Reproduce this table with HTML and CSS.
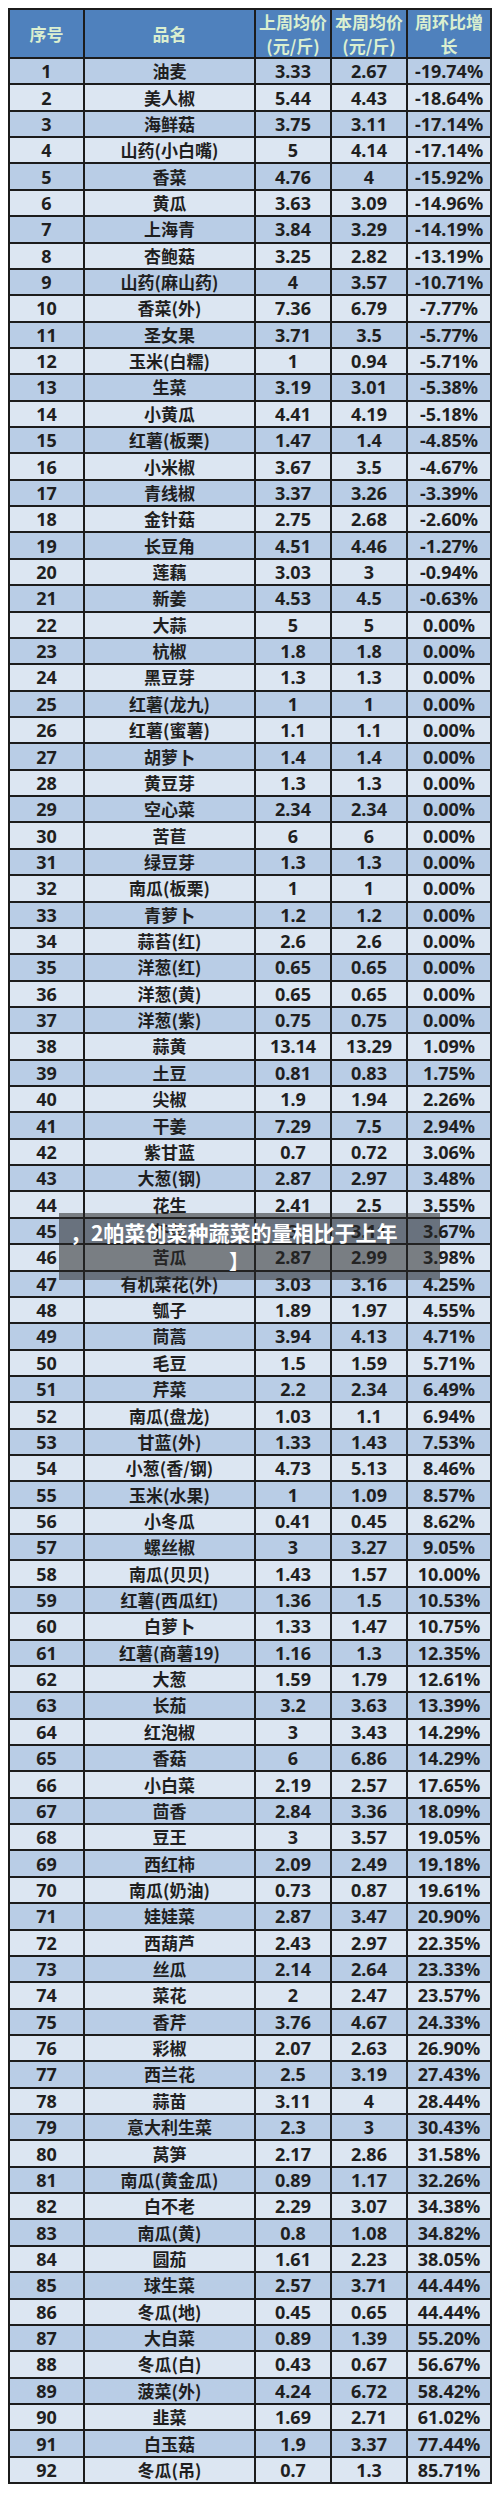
FILE: index.html
```html
<!DOCTYPE html>
<html lang="zh-CN">
<head>
<meta charset="utf-8">
<title>蔬菜周均价环比</title>
<link rel="stylesheet" href="styles.css">
</head>
<body>
<div class="page">
  <div class="grid">
    <div class="row head">
      <div class="cell">序号</div>
      <div class="cell">品名</div>
      <div class="cell">上周均价<br>(元/斤)</div>
      <div class="cell">本周均价<br>(元/斤)</div>
      <div class="cell">周环比增<br>长</div>
    </div>
    <div class="row"><div class="cell">1</div><div class="cell name">油麦</div><div class="cell">3.33</div><div class="cell">2.67</div><div class="cell">-19.74%</div></div>
    <div class="row"><div class="cell">2</div><div class="cell name">美人椒</div><div class="cell">5.44</div><div class="cell">4.43</div><div class="cell">-18.64%</div></div>
    <div class="row"><div class="cell">3</div><div class="cell name">海鲜菇</div><div class="cell">3.75</div><div class="cell">3.11</div><div class="cell">-17.14%</div></div>
    <div class="row"><div class="cell">4</div><div class="cell name">山药(小白嘴)</div><div class="cell">5</div><div class="cell">4.14</div><div class="cell">-17.14%</div></div>
    <div class="row"><div class="cell">5</div><div class="cell name">香菜</div><div class="cell">4.76</div><div class="cell">4</div><div class="cell">-15.92%</div></div>
    <div class="row"><div class="cell">6</div><div class="cell name">黄瓜</div><div class="cell">3.63</div><div class="cell">3.09</div><div class="cell">-14.96%</div></div>
    <div class="row"><div class="cell">7</div><div class="cell name">上海青</div><div class="cell">3.84</div><div class="cell">3.29</div><div class="cell">-14.19%</div></div>
    <div class="row"><div class="cell">8</div><div class="cell name">杏鲍菇</div><div class="cell">3.25</div><div class="cell">2.82</div><div class="cell">-13.19%</div></div>
    <div class="row"><div class="cell">9</div><div class="cell name">山药(麻山药)</div><div class="cell">4</div><div class="cell">3.57</div><div class="cell">-10.71%</div></div>
    <div class="row"><div class="cell">10</div><div class="cell name">香菜(外)</div><div class="cell">7.36</div><div class="cell">6.79</div><div class="cell">-7.77%</div></div>
    <div class="row"><div class="cell">11</div><div class="cell name">圣女果</div><div class="cell">3.71</div><div class="cell">3.5</div><div class="cell">-5.77%</div></div>
    <div class="row"><div class="cell">12</div><div class="cell name">玉米(白糯)</div><div class="cell">1</div><div class="cell">0.94</div><div class="cell">-5.71%</div></div>
    <div class="row"><div class="cell">13</div><div class="cell name">生菜</div><div class="cell">3.19</div><div class="cell">3.01</div><div class="cell">-5.38%</div></div>
    <div class="row"><div class="cell">14</div><div class="cell name">小黄瓜</div><div class="cell">4.41</div><div class="cell">4.19</div><div class="cell">-5.18%</div></div>
    <div class="row"><div class="cell">15</div><div class="cell name">红薯(板栗)</div><div class="cell">1.47</div><div class="cell">1.4</div><div class="cell">-4.85%</div></div>
    <div class="row"><div class="cell">16</div><div class="cell name">小米椒</div><div class="cell">3.67</div><div class="cell">3.5</div><div class="cell">-4.67%</div></div>
    <div class="row"><div class="cell">17</div><div class="cell name">青线椒</div><div class="cell">3.37</div><div class="cell">3.26</div><div class="cell">-3.39%</div></div>
    <div class="row"><div class="cell">18</div><div class="cell name">金针菇</div><div class="cell">2.75</div><div class="cell">2.68</div><div class="cell">-2.60%</div></div>
    <div class="row"><div class="cell">19</div><div class="cell name">长豆角</div><div class="cell">4.51</div><div class="cell">4.46</div><div class="cell">-1.27%</div></div>
    <div class="row"><div class="cell">20</div><div class="cell name">莲藕</div><div class="cell">3.03</div><div class="cell">3</div><div class="cell">-0.94%</div></div>
    <div class="row"><div class="cell">21</div><div class="cell name">新姜</div><div class="cell">4.53</div><div class="cell">4.5</div><div class="cell">-0.63%</div></div>
    <div class="row"><div class="cell">22</div><div class="cell name">大蒜</div><div class="cell">5</div><div class="cell">5</div><div class="cell">0.00%</div></div>
    <div class="row"><div class="cell">23</div><div class="cell name">杭椒</div><div class="cell">1.8</div><div class="cell">1.8</div><div class="cell">0.00%</div></div>
    <div class="row"><div class="cell">24</div><div class="cell name">黑豆芽</div><div class="cell">1.3</div><div class="cell">1.3</div><div class="cell">0.00%</div></div>
    <div class="row"><div class="cell">25</div><div class="cell name">红薯(龙九)</div><div class="cell">1</div><div class="cell">1</div><div class="cell">0.00%</div></div>
    <div class="row"><div class="cell">26</div><div class="cell name">红薯(蜜薯)</div><div class="cell">1.1</div><div class="cell">1.1</div><div class="cell">0.00%</div></div>
    <div class="row"><div class="cell">27</div><div class="cell name">胡萝卜</div><div class="cell">1.4</div><div class="cell">1.4</div><div class="cell">0.00%</div></div>
    <div class="row"><div class="cell">28</div><div class="cell name">黄豆芽</div><div class="cell">1.3</div><div class="cell">1.3</div><div class="cell">0.00%</div></div>
    <div class="row"><div class="cell">29</div><div class="cell name">空心菜</div><div class="cell">2.34</div><div class="cell">2.34</div><div class="cell">0.00%</div></div>
    <div class="row"><div class="cell">30</div><div class="cell name">苦苣</div><div class="cell">6</div><div class="cell">6</div><div class="cell">0.00%</div></div>
    <div class="row"><div class="cell">31</div><div class="cell name">绿豆芽</div><div class="cell">1.3</div><div class="cell">1.3</div><div class="cell">0.00%</div></div>
    <div class="row"><div class="cell">32</div><div class="cell name">南瓜(板栗)</div><div class="cell">1</div><div class="cell">1</div><div class="cell">0.00%</div></div>
    <div class="row"><div class="cell">33</div><div class="cell name">青萝卜</div><div class="cell">1.2</div><div class="cell">1.2</div><div class="cell">0.00%</div></div>
    <div class="row"><div class="cell">34</div><div class="cell name">蒜苔(红)</div><div class="cell">2.6</div><div class="cell">2.6</div><div class="cell">0.00%</div></div>
    <div class="row"><div class="cell">35</div><div class="cell name">洋葱(红)</div><div class="cell">0.65</div><div class="cell">0.65</div><div class="cell">0.00%</div></div>
    <div class="row"><div class="cell">36</div><div class="cell name">洋葱(黄)</div><div class="cell">0.65</div><div class="cell">0.65</div><div class="cell">0.00%</div></div>
    <div class="row"><div class="cell">37</div><div class="cell name">洋葱(紫)</div><div class="cell">0.75</div><div class="cell">0.75</div><div class="cell">0.00%</div></div>
    <div class="row"><div class="cell">38</div><div class="cell name">蒜黄</div><div class="cell">13.14</div><div class="cell">13.29</div><div class="cell">1.09%</div></div>
    <div class="row"><div class="cell">39</div><div class="cell name">土豆</div><div class="cell">0.81</div><div class="cell">0.83</div><div class="cell">1.75%</div></div>
    <div class="row"><div class="cell">40</div><div class="cell name">尖椒</div><div class="cell">1.9</div><div class="cell">1.94</div><div class="cell">2.26%</div></div>
    <div class="row"><div class="cell">41</div><div class="cell name">干姜</div><div class="cell">7.29</div><div class="cell">7.5</div><div class="cell">2.94%</div></div>
    <div class="row"><div class="cell">42</div><div class="cell name">紫甘蓝</div><div class="cell">0.7</div><div class="cell">0.72</div><div class="cell">3.06%</div></div>
    <div class="row"><div class="cell">43</div><div class="cell name">大葱(钢)</div><div class="cell">2.87</div><div class="cell">2.97</div><div class="cell">3.48%</div></div>
    <div class="row"><div class="cell">44</div><div class="cell name">花生</div><div class="cell">2.41</div><div class="cell">2.5</div><div class="cell">3.55%</div></div>
    <div class="row"><div class="cell">45</div><div class="cell name">芥蓝</div><div class="cell">3</div><div class="cell">3.11</div><div class="cell">3.67%</div></div>
    <div class="row"><div class="cell">46</div><div class="cell name">苦瓜</div><div class="cell">2.87</div><div class="cell">2.99</div><div class="cell">3.98%</div></div>
    <div class="row"><div class="cell">47</div><div class="cell name">有机菜花(外)</div><div class="cell">3.03</div><div class="cell">3.16</div><div class="cell">4.25%</div></div>
    <div class="row"><div class="cell">48</div><div class="cell name">瓠子</div><div class="cell">1.89</div><div class="cell">1.97</div><div class="cell">4.55%</div></div>
    <div class="row"><div class="cell">49</div><div class="cell name">茼蒿</div><div class="cell">3.94</div><div class="cell">4.13</div><div class="cell">4.71%</div></div>
    <div class="row"><div class="cell">50</div><div class="cell name">毛豆</div><div class="cell">1.5</div><div class="cell">1.59</div><div class="cell">5.71%</div></div>
    <div class="row"><div class="cell">51</div><div class="cell name">芹菜</div><div class="cell">2.2</div><div class="cell">2.34</div><div class="cell">6.49%</div></div>
    <div class="row"><div class="cell">52</div><div class="cell name">南瓜(盘龙)</div><div class="cell">1.03</div><div class="cell">1.1</div><div class="cell">6.94%</div></div>
    <div class="row"><div class="cell">53</div><div class="cell name">甘蓝(外)</div><div class="cell">1.33</div><div class="cell">1.43</div><div class="cell">7.53%</div></div>
    <div class="row"><div class="cell">54</div><div class="cell name">小葱(香/钢)</div><div class="cell">4.73</div><div class="cell">5.13</div><div class="cell">8.46%</div></div>
    <div class="row"><div class="cell">55</div><div class="cell name">玉米(水果)</div><div class="cell">1</div><div class="cell">1.09</div><div class="cell">8.57%</div></div>
    <div class="row"><div class="cell">56</div><div class="cell name">小冬瓜</div><div class="cell">0.41</div><div class="cell">0.45</div><div class="cell">8.62%</div></div>
    <div class="row"><div class="cell">57</div><div class="cell name">螺丝椒</div><div class="cell">3</div><div class="cell">3.27</div><div class="cell">9.05%</div></div>
    <div class="row"><div class="cell">58</div><div class="cell name">南瓜(贝贝)</div><div class="cell">1.43</div><div class="cell">1.57</div><div class="cell">10.00%</div></div>
    <div class="row"><div class="cell">59</div><div class="cell name">红薯(西瓜红)</div><div class="cell">1.36</div><div class="cell">1.5</div><div class="cell">10.53%</div></div>
    <div class="row"><div class="cell">60</div><div class="cell name">白萝卜</div><div class="cell">1.33</div><div class="cell">1.47</div><div class="cell">10.75%</div></div>
    <div class="row"><div class="cell">61</div><div class="cell name">红薯(商薯19)</div><div class="cell">1.16</div><div class="cell">1.3</div><div class="cell">12.35%</div></div>
    <div class="row"><div class="cell">62</div><div class="cell name">大葱</div><div class="cell">1.59</div><div class="cell">1.79</div><div class="cell">12.61%</div></div>
    <div class="row"><div class="cell">63</div><div class="cell name">长茄</div><div class="cell">3.2</div><div class="cell">3.63</div><div class="cell">13.39%</div></div>
    <div class="row"><div class="cell">64</div><div class="cell name">红泡椒</div><div class="cell">3</div><div class="cell">3.43</div><div class="cell">14.29%</div></div>
    <div class="row"><div class="cell">65</div><div class="cell name">香菇</div><div class="cell">6</div><div class="cell">6.86</div><div class="cell">14.29%</div></div>
    <div class="row"><div class="cell">66</div><div class="cell name">小白菜</div><div class="cell">2.19</div><div class="cell">2.57</div><div class="cell">17.65%</div></div>
    <div class="row"><div class="cell">67</div><div class="cell name">茴香</div><div class="cell">2.84</div><div class="cell">3.36</div><div class="cell">18.09%</div></div>
    <div class="row"><div class="cell">68</div><div class="cell name">豆王</div><div class="cell">3</div><div class="cell">3.57</div><div class="cell">19.05%</div></div>
    <div class="row"><div class="cell">69</div><div class="cell name">西红柿</div><div class="cell">2.09</div><div class="cell">2.49</div><div class="cell">19.18%</div></div>
    <div class="row"><div class="cell">70</div><div class="cell name">南瓜(奶油)</div><div class="cell">0.73</div><div class="cell">0.87</div><div class="cell">19.61%</div></div>
    <div class="row"><div class="cell">71</div><div class="cell name">娃娃菜</div><div class="cell">2.87</div><div class="cell">3.47</div><div class="cell">20.90%</div></div>
    <div class="row"><div class="cell">72</div><div class="cell name">西葫芦</div><div class="cell">2.43</div><div class="cell">2.97</div><div class="cell">22.35%</div></div>
    <div class="row"><div class="cell">73</div><div class="cell name">丝瓜</div><div class="cell">2.14</div><div class="cell">2.64</div><div class="cell">23.33%</div></div>
    <div class="row"><div class="cell">74</div><div class="cell name">菜花</div><div class="cell">2</div><div class="cell">2.47</div><div class="cell">23.57%</div></div>
    <div class="row"><div class="cell">75</div><div class="cell name">香芹</div><div class="cell">3.76</div><div class="cell">4.67</div><div class="cell">24.33%</div></div>
    <div class="row"><div class="cell">76</div><div class="cell name">彩椒</div><div class="cell">2.07</div><div class="cell">2.63</div><div class="cell">26.90%</div></div>
    <div class="row"><div class="cell">77</div><div class="cell name">西兰花</div><div class="cell">2.5</div><div class="cell">3.19</div><div class="cell">27.43%</div></div>
    <div class="row"><div class="cell">78</div><div class="cell name">蒜苗</div><div class="cell">3.11</div><div class="cell">4</div><div class="cell">28.44%</div></div>
    <div class="row"><div class="cell">79</div><div class="cell name">意大利生菜</div><div class="cell">2.3</div><div class="cell">3</div><div class="cell">30.43%</div></div>
    <div class="row"><div class="cell">80</div><div class="cell name">莴笋</div><div class="cell">2.17</div><div class="cell">2.86</div><div class="cell">31.58%</div></div>
    <div class="row"><div class="cell">81</div><div class="cell name">南瓜(黄金瓜)</div><div class="cell">0.89</div><div class="cell">1.17</div><div class="cell">32.26%</div></div>
    <div class="row"><div class="cell">82</div><div class="cell name">白不老</div><div class="cell">2.29</div><div class="cell">3.07</div><div class="cell">34.38%</div></div>
    <div class="row"><div class="cell">83</div><div class="cell name">南瓜(黄)</div><div class="cell">0.8</div><div class="cell">1.08</div><div class="cell">34.82%</div></div>
    <div class="row"><div class="cell">84</div><div class="cell name">圆茄</div><div class="cell">1.61</div><div class="cell">2.23</div><div class="cell">38.05%</div></div>
    <div class="row"><div class="cell">85</div><div class="cell name">球生菜</div><div class="cell">2.57</div><div class="cell">3.71</div><div class="cell">44.44%</div></div>
    <div class="row"><div class="cell">86</div><div class="cell name">冬瓜(地)</div><div class="cell">0.45</div><div class="cell">0.65</div><div class="cell">44.44%</div></div>
    <div class="row"><div class="cell">87</div><div class="cell name">大白菜</div><div class="cell">0.89</div><div class="cell">1.39</div><div class="cell">55.20%</div></div>
    <div class="row"><div class="cell">88</div><div class="cell name">冬瓜(白)</div><div class="cell">0.43</div><div class="cell">0.67</div><div class="cell">56.67%</div></div>
    <div class="row"><div class="cell">89</div><div class="cell name">菠菜(外)</div><div class="cell">4.24</div><div class="cell">6.72</div><div class="cell">58.42%</div></div>
    <div class="row"><div class="cell">90</div><div class="cell name">韭菜</div><div class="cell">1.69</div><div class="cell">2.71</div><div class="cell">61.02%</div></div>
    <div class="row"><div class="cell">91</div><div class="cell name">白玉菇</div><div class="cell">1.9</div><div class="cell">3.37</div><div class="cell">77.44%</div></div>
    <div class="row"><div class="cell">92</div><div class="cell name">冬瓜(吊)</div><div class="cell">0.7</div><div class="cell">1.3</div><div class="cell">85.71%</div></div>
  </div>

  <div class="caption">
    <div class="caption-line">，2帕菜创菜种蔬菜的量相比于上年</div>
    <div class="caption-end">】</div>
  </div>
</div>
</body>
</html>
```

FILE: styles.css
```css
html, body {
  background: #ffffff;
}

body {
  margin: 8px;
}

.page {
  position: relative;
  width: 484px;
}

.grid {
  display: flex;
  flex-direction: column;
  gap: 2px;
  padding: 2px;
  background: #1c1c1c;
  font-family: "Noto Sans", "Noto Sans CJK SC", sans-serif;
  font-weight: 700;
  color: #1f1f1f;
}

.row {
  display: grid;
  grid-template-columns: 73px 169px 74px 74px 82px;
  column-gap: 2px;
  height: 24.37px;
}

.cell {
  display: flex;
  align-items: center;
  justify-content: center;
  text-align: center;
  font-size: 18px;
  line-height: 24px;
  white-space: nowrap;
  overflow: hidden;
}

.cell.name {
  font-family: "Noto Sans CJK SC", sans-serif;
  font-size: 17px;
}

.row:nth-child(even) .cell {
  background: #b9cde6;
}

.row:nth-child(odd) .cell {
  background: #dce6f2;
}

.row.head {
  height: 47px;
}

.row.head .cell {
  background: #4f81bd;
  color: #dbefd0;
  font-family: "Noto Sans CJK SC", sans-serif;
  font-size: 17px;
  line-height: 24px;
}

.caption {
  position: absolute;
  left: 51px;
  top: 1205px;
  width: 381px;
  height: 67px;
  background: rgba(40, 40, 40, 0.55);
  font-family: "Noto Sans CJK SC", sans-serif;
  font-weight: 700;
  color: #ffffff;
}

.caption-line {
  height: 30px;
  margin: 4px 0 0 11px;
  font-size: 21px;
  line-height: 30px;
  white-space: nowrap;
}

.caption-end {
  margin-left: 170px;
  font-size: 20px;
  line-height: 28px;
}
```
